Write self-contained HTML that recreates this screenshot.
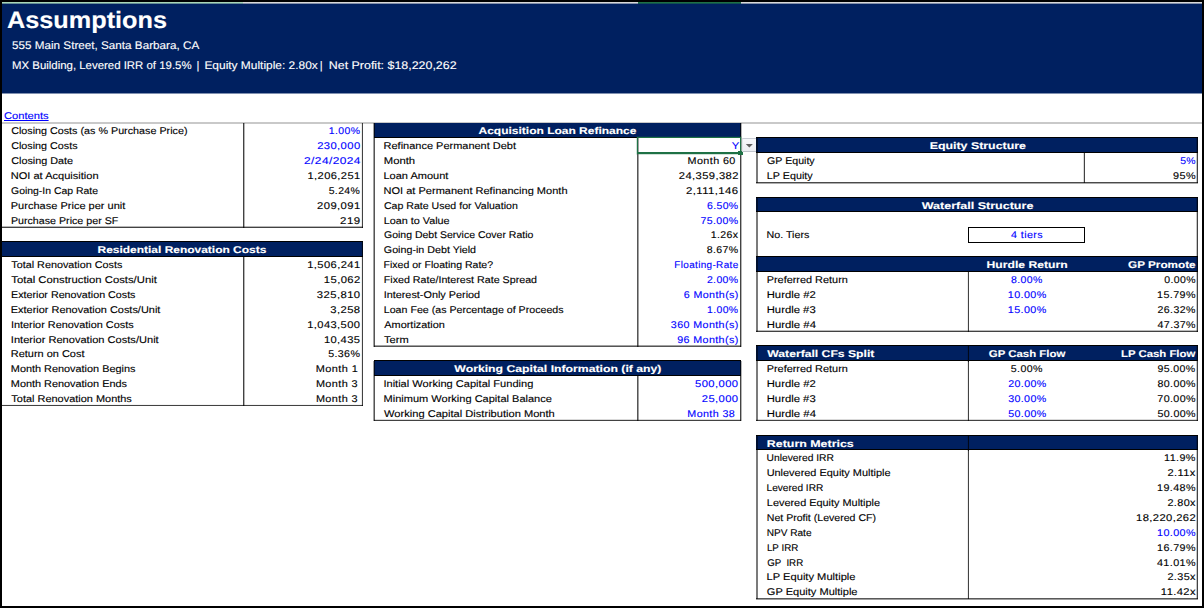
<!DOCTYPE html>
<html><head><meta charset="utf-8"><title>Assumptions</title>
<style>
html,body{margin:0;padding:0;background:#fff;}
body{text-rendering:geometricPrecision;width:1204px;height:608px;position:relative;overflow:hidden;font-family:"Liberation Sans",sans-serif;}
body>div,body>svg{position:absolute;}
.t{white-space:pre;-webkit-text-stroke:0.12px currentColor;}
</style></head><body>
<div class="r" style="left:0.00px;top:0.00px;width:1204.00px;height:2.00px;background:#000;"></div>
<div class="r" style="left:0.00px;top:606.00px;width:1204.00px;height:2.00px;background:#000;"></div>
<div class="r" style="left:0.00px;top:0.00px;width:2.00px;height:608.00px;background:#000;"></div>
<div class="r" style="left:1202.00px;top:0.00px;width:2.00px;height:608.00px;background:#000;"></div>
<div class="r" style="left:2.00px;top:2.00px;width:241.00px;height:1.00px;background:#a9d6b7;"></div>
<div class="r" style="left:2.00px;top:3.00px;width:241.00px;height:1.00px;background:#658d94;"></div>
<div class="r" style="left:243.00px;top:2.00px;width:394.80px;height:1.00px;background:#d9d9d9;"></div>
<div class="r" style="left:243.00px;top:3.00px;width:394.80px;height:1.00px;background:#828fa9;"></div>
<div class="r" style="left:637.80px;top:2.00px;width:103.00px;height:1.00px;background:#1e7145;"></div>
<div class="r" style="left:637.80px;top:3.00px;width:103.00px;height:1.00px;background:#125150;"></div>
<div class="r" style="left:740.80px;top:2.00px;width:461.20px;height:1.00px;background:#d9d9d9;"></div>
<div class="r" style="left:740.80px;top:3.00px;width:461.20px;height:1.00px;background:#828fa9;"></div>
<div class="r" style="left:2.00px;top:4.00px;width:1200.00px;height:89.00px;background:#002060;"></div>
<div class="r" style="left:2.00px;top:93.00px;width:1200.00px;height:1.00px;background:#8090b0;"></div>
<div class="r" style="left:2.00px;top:122.10px;width:1200.00px;height:1.50px;background:#c9c9c9;"></div>
<div class="t" style="left:0;top:4.00px;height:34px;line-height:34px;font-size:23.8px;color:#fff;transform-origin:0 50%;transform:translateX(7.00px) scaleX(1.0615);font-weight:bold;">Assumptions</div>
<div class="t" style="left:0;top:38.00px;height:16px;line-height:16px;font-size:11.1px;color:#fff;transform-origin:0 50%;transform:translateX(12.00px) scaleX(1.0540);">555 Main Street, Santa Barbara, CA</div>
<div class="t" style="left:0;top:58.00px;height:16px;line-height:16px;font-size:11.1px;color:#fff;transform-origin:0 50%;transform:translateX(12.00px) scaleX(1.0291);">MX Building, Levered IRR of 19.5%</div>
<div class="t" style="left:0;top:58.00px;height:16px;line-height:16px;font-size:11.1px;color:#fff;transform-origin:0 50%;transform:translateX(196.60px) scaleX(1.0000);">|</div>
<div class="t" style="left:0;top:58.00px;height:16px;line-height:16px;font-size:11.1px;color:#fff;transform-origin:0 50%;transform:translateX(204.40px) scaleX(1.0754);">Equity Multiple: 2.80x</div>
<div class="t" style="left:0;top:58.00px;height:16px;line-height:16px;font-size:11.1px;color:#fff;transform-origin:0 50%;transform:translateX(319.70px) scaleX(1.0000);">|</div>
<div class="t" style="left:0;top:58.00px;height:16px;line-height:16px;font-size:11.1px;color:#fff;transform-origin:0 50%;transform:translateX(328.80px) scaleX(1.1200);">Net Profit: $18,220,262</div>
<div class="t" style="left:0;top:109.00px;height:15px;line-height:15px;font-size:9.8px;color:#0000ff;transform-origin:0 50%;transform:translateX(4.00px) scaleX(1.1372);text-decoration:underline;">Contents</div>
<div class="t" style="top:124px;height:15px;line-height:15px;font-size:9.8px;color:#000;left:0;transform-origin:0 50%;transform:translateX(11.14px) scaleX(1.0978);">Closing Costs (as % Purchase Price)</div>
<div class="t" style="top:124px;height:15px;line-height:15px;font-size:9.8px;color:#0000ff;letter-spacing:0.35px;left:0;transform-origin:100% 50%;transform:translateX(360.31px) translateX(-100%) scaleX(1.0648);">1.00%</div>
<div class="t" style="top:139px;height:15px;line-height:15px;font-size:9.8px;color:#000;left:0;transform-origin:0 50%;transform:translateX(11.16px) scaleX(1.0991);">Closing Costs</div>
<div class="t" style="top:139px;height:15px;line-height:15px;font-size:9.8px;color:#0000ff;letter-spacing:0.35px;left:0;transform-origin:100% 50%;transform:translateX(360.54px) translateX(-100%) scaleX(1.1458);">230,000</div>
<div class="t" style="top:154px;height:15px;line-height:15px;font-size:9.8px;color:#000;left:0;transform-origin:0 50%;transform:translateX(11.16px) scaleX(1.1045);">Closing Date</div>
<div class="t" style="top:154px;height:15px;line-height:15px;font-size:9.8px;color:#0000ff;letter-spacing:0.35px;left:0;transform-origin:100% 50%;transform:translateX(360.79px) translateX(-100%) scaleX(1.2135);">2/24/2024</div>
<div class="t" style="top:169px;height:15px;line-height:15px;font-size:9.8px;color:#000;left:0;transform-origin:0 50%;transform:translateX(10.76px) scaleX(1.1279);">NOI at Acquisition</div>
<div class="t" style="top:169px;height:15px;line-height:15px;font-size:9.8px;color:#000;letter-spacing:0.35px;left:0;transform-origin:100% 50%;transform:translateX(360.56px) translateX(-100%) scaleX(1.1354);">1,206,251</div>
<div class="t" style="top:184px;height:15px;line-height:15px;font-size:9.8px;color:#000;left:0;transform-origin:0 50%;transform:translateX(11.02px) scaleX(1.0640);">Going-In Cap Rate</div>
<div class="t" style="top:184px;height:15px;line-height:15px;font-size:9.8px;color:#000;letter-spacing:0.35px;left:0;transform-origin:100% 50%;transform:translateX(360.23px) translateX(-100%) scaleX(1.0687);">5.24%</div>
<div class="t" style="top:199px;height:15px;line-height:15px;font-size:9.8px;color:#000;left:0;transform-origin:0 50%;transform:translateX(10.77px) scaleX(1.1254);">Purchase Price per unit</div>
<div class="t" style="top:199px;height:15px;line-height:15px;font-size:9.8px;color:#000;letter-spacing:0.35px;left:0;transform-origin:100% 50%;transform:translateX(360.59px) translateX(-100%) scaleX(1.1498);">209,091</div>
<div class="t" style="top:214px;height:15px;line-height:15px;font-size:9.8px;color:#000;left:0;transform-origin:0 50%;transform:translateX(10.92px) scaleX(1.0894);">Purchase Price per SF</div>
<div class="t" style="top:214px;height:15px;line-height:15px;font-size:9.8px;color:#000;letter-spacing:0.35px;left:0;transform-origin:100% 50%;transform:translateX(360.48px) translateX(-100%) scaleX(1.1702);">219</div>
<div class="r" style="left:243.00px;top:123.00px;width:1.00px;height:105.00px;background:rgba(0,0,0,0.740);"></div>
<div class="r" style="left:244.00px;top:123.00px;width:1.00px;height:105.00px;background:rgba(0,0,0,0.296);"></div>
<div class="r" style="left:361.00px;top:123.00px;width:1.00px;height:105.00px;background:rgba(0,0,0,0.074);"></div>
<div class="r" style="left:362.00px;top:123.00px;width:1.00px;height:105.00px;background:rgba(0,0,0,0.740);"></div>
<div class="r" style="left:2.00px;top:226.00px;width:361.00px;height:1.00px;background:rgba(0,0,0,0.281);"></div>
<div class="r" style="left:2.00px;top:227.00px;width:361.00px;height:1.00px;background:rgba(0,0,0,0.740);"></div>
<div class="r" style="left:2.00px;top:241.88px;width:360.90px;height:14.86px;background:#002060;"></div>
<div class="r" style="left:2.00px;top:255.74px;width:360.90px;height:1.00px;background:#000;"></div>
<div class="r" style="left:2.00px;top:241.38px;width:360.90px;height:1.00px;background:#000;"></div>
<div class="t" style="top:243px;height:15px;line-height:15px;font-size:9.8px;color:#fff;font-weight:bold;left:0;transform-origin:50% 50%;transform:translateX(181.94px) translateX(-50%) scaleX(1.2212);">Residential Renovation Costs</div>
<div class="t" style="top:258px;height:15px;line-height:15px;font-size:9.8px;color:#000;left:0;transform-origin:0 50%;transform:translateX(11.31px) scaleX(1.1021);">Total Renovation Costs</div>
<div class="t" style="top:258px;height:15px;line-height:15px;font-size:9.8px;color:#000;letter-spacing:0.35px;left:0;transform-origin:100% 50%;transform:translateX(360.52px) translateX(-100%) scaleX(1.1413);">1,506,241</div>
<div class="t" style="top:273px;height:15px;line-height:15px;font-size:9.8px;color:#000;left:0;transform-origin:0 50%;transform:translateX(11.34px) scaleX(1.1517);">Total Construction Costs/Unit</div>
<div class="t" style="top:273px;height:15px;line-height:15px;font-size:9.8px;color:#000;letter-spacing:0.35px;left:0;transform-origin:100% 50%;transform:translateX(360.72px) translateX(-100%) scaleX(1.1506);">15,062</div>
<div class="t" style="top:288px;height:15px;line-height:15px;font-size:9.8px;color:#000;left:0;transform-origin:0 50%;transform:translateX(10.99px) scaleX(1.0939);">Exterior Renovation Costs</div>
<div class="t" style="top:288px;height:15px;line-height:15px;font-size:9.8px;color:#000;letter-spacing:0.35px;left:0;transform-origin:100% 50%;transform:translateX(360.51px) translateX(-100%) scaleX(1.1523);">325,810</div>
<div class="t" style="top:303px;height:15px;line-height:15px;font-size:9.8px;color:#000;left:0;transform-origin:0 50%;transform:translateX(10.82px) scaleX(1.1164);">Exterior Renovation Costs/Unit</div>
<div class="t" style="top:303px;height:15px;line-height:15px;font-size:9.8px;color:#000;letter-spacing:0.35px;left:0;transform-origin:100% 50%;transform:translateX(360.48px) translateX(-100%) scaleX(1.1486);">3,258</div>
<div class="t" style="top:318px;height:15px;line-height:15px;font-size:9.8px;color:#000;left:0;transform-origin:0 50%;transform:translateX(10.90px) scaleX(1.1106);">Interior Renovation Costs</div>
<div class="t" style="top:318px;height:15px;line-height:15px;font-size:9.8px;color:#000;letter-spacing:0.35px;left:0;transform-origin:100% 50%;transform:translateX(360.32px) translateX(-100%) scaleX(1.1364);">1,043,500</div>
<div class="t" style="top:333px;height:15px;line-height:15px;font-size:9.8px;color:#000;left:0;transform-origin:0 50%;transform:translateX(10.84px) scaleX(1.1313);">Interior Renovation Costs/Unit</div>
<div class="t" style="top:333px;height:15px;line-height:15px;font-size:9.8px;color:#000;letter-spacing:0.35px;left:0;transform-origin:100% 50%;transform:translateX(360.46px) translateX(-100%) scaleX(1.1397);">10,435</div>
<div class="t" style="top:347px;height:15px;line-height:15px;font-size:9.8px;color:#000;left:0;transform-origin:0 50%;transform:translateX(10.77px) scaleX(1.1178);">Return on Cost</div>
<div class="t" style="top:347px;height:15px;line-height:15px;font-size:9.8px;color:#000;letter-spacing:0.35px;left:0;transform-origin:100% 50%;transform:translateX(360.26px) translateX(-100%) scaleX(1.0878);">5.36%</div>
<div class="t" style="top:362px;height:15px;line-height:15px;font-size:9.8px;color:#000;left:0;transform-origin:0 50%;transform:translateX(10.86px) scaleX(1.1101);">Month Renovation Begins</div>
<div class="t" style="top:362px;height:15px;line-height:15px;font-size:9.8px;color:#000;letter-spacing:0.35px;left:0;transform-origin:100% 50%;transform:translateX(361.61px) translateX(-100%) scaleX(1.1194);">Month 1 </div>
<div class="t" style="top:377px;height:15px;line-height:15px;font-size:9.8px;color:#000;left:0;transform-origin:0 50%;transform:translateX(10.86px) scaleX(1.1099);">Month Renovation Ends</div>
<div class="t" style="top:377px;height:15px;line-height:15px;font-size:9.8px;color:#000;letter-spacing:0.35px;left:0;transform-origin:100% 50%;transform:translateX(361.39px) translateX(-100%) scaleX(1.1121);">Month 3 </div>
<div class="t" style="top:392px;height:15px;line-height:15px;font-size:9.8px;color:#000;left:0;transform-origin:0 50%;transform:translateX(11.37px) scaleX(1.1171);">Total Renovation Months</div>
<div class="t" style="top:392px;height:15px;line-height:15px;font-size:9.8px;color:#000;letter-spacing:0.35px;left:0;transform-origin:100% 50%;transform:translateX(361.39px) translateX(-100%) scaleX(1.1121);">Month 3 </div>
<div class="r" style="left:243.00px;top:257.00px;width:1.00px;height:149.00px;background:rgba(0,0,0,0.740);"></div>
<div class="r" style="left:244.00px;top:257.00px;width:1.00px;height:149.00px;background:rgba(0,0,0,0.296);"></div>
<div class="r" style="left:361.00px;top:242.00px;width:1.00px;height:164.00px;background:rgba(0,0,0,0.074);"></div>
<div class="r" style="left:362.00px;top:242.00px;width:1.00px;height:164.00px;background:rgba(0,0,0,0.740);"></div>
<div class="r" style="left:2.00px;top:404.00px;width:361.00px;height:1.00px;background:rgba(0,0,0,0.044);"></div>
<div class="r" style="left:2.00px;top:405.00px;width:361.00px;height:1.00px;background:rgba(0,0,0,0.740);"></div>
<div class="r" style="left:373.50px;top:123.00px;width:367.50px;height:14.86px;background:#002060;"></div>
<div class="r" style="left:373.50px;top:136.86px;width:367.50px;height:1.00px;background:#000;"></div>
<div class="t" style="top:124px;height:15px;line-height:15px;font-size:9.8px;color:#fff;font-weight:bold;left:0;transform-origin:50% 50%;transform:translateX(557.47px) translateX(-50%) scaleX(1.2235);">Acquisition Loan Refinance</div>
<div class="t" style="top:139px;height:15px;line-height:15px;font-size:9.8px;color:#000;left:0;transform-origin:0 50%;transform:translateX(383.58px) scaleX(1.1207);">Refinance Permanent Debt</div>
<div class="t" style="top:139px;height:15px;line-height:15px;font-size:9.8px;color:#0000ff;letter-spacing:0.35px;left:0;transform-origin:100% 50%;transform:translateX(739.61px) translateX(-100%) scaleX(1.1510);">Y</div>
<div class="t" style="top:154px;height:15px;line-height:15px;font-size:9.8px;color:#000;left:0;transform-origin:0 50%;transform:translateX(383.73px) scaleX(1.1521);">Month</div>
<div class="t" style="top:154px;height:15px;line-height:15px;font-size:9.8px;color:#000;letter-spacing:0.35px;left:0;transform-origin:100% 50%;transform:translateX(739.08px) translateX(-100%) scaleX(1.1019);">Month 60 </div>
<div class="t" style="top:169px;height:15px;line-height:15px;font-size:9.8px;color:#000;left:0;transform-origin:0 50%;transform:translateX(383.45px) scaleX(1.1255);">Loan Amount</div>
<div class="t" style="top:169px;height:15px;line-height:15px;font-size:9.8px;color:#000;letter-spacing:0.35px;left:0;transform-origin:100% 50%;transform:translateX(738.79px) translateX(-100%) scaleX(1.1417);">24,359,382</div>
<div class="t" style="top:184px;height:15px;line-height:15px;font-size:9.8px;color:#000;left:0;transform-origin:0 50%;transform:translateX(383.53px) scaleX(1.1262);">NOI at Permanent Refinancing Month</div>
<div class="t" style="top:184px;height:15px;line-height:15px;font-size:9.8px;color:#000;letter-spacing:0.35px;left:0;transform-origin:100% 50%;transform:translateX(738.61px) translateX(-100%) scaleX(1.1634);">2,111,146</div>
<div class="t" style="top:199px;height:15px;line-height:15px;font-size:9.8px;color:#000;left:0;transform-origin:0 50%;transform:translateX(383.93px) scaleX(1.0798);">Cap Rate Used for Valuation</div>
<div class="t" style="top:199px;height:15px;line-height:15px;font-size:9.8px;color:#0000ff;letter-spacing:0.35px;left:0;transform-origin:100% 50%;transform:translateX(738.54px) translateX(-100%) scaleX(1.0679);">6.50%</div>
<div class="t" style="top:214px;height:15px;line-height:15px;font-size:9.8px;color:#000;left:0;transform-origin:0 50%;transform:translateX(383.67px) scaleX(1.1043);">Loan to Value</div>
<div class="t" style="top:214px;height:15px;line-height:15px;font-size:9.8px;color:#0000ff;letter-spacing:0.35px;left:0;transform-origin:100% 50%;transform:translateX(738.53px) translateX(-100%) scaleX(1.0766);">75.00%</div>
<div class="t" style="top:228px;height:15px;line-height:15px;font-size:9.8px;color:#000;left:0;transform-origin:0 50%;transform:translateX(383.96px) scaleX(1.0715);">Going Debt Service Cover Ratio</div>
<div class="t" style="top:228px;height:15px;line-height:15px;font-size:9.8px;color:#000;letter-spacing:0.35px;left:0;transform-origin:100% 50%;transform:translateX(738.33px) translateX(-100%) scaleX(1.0767);">1.26x</div>
<div class="t" style="top:243px;height:15px;line-height:15px;font-size:9.8px;color:#000;left:0;transform-origin:0 50%;transform:translateX(383.84px) scaleX(1.0927);">Going-in Debt Yield</div>
<div class="t" style="top:243px;height:15px;line-height:15px;font-size:9.8px;color:#000;letter-spacing:0.35px;left:0;transform-origin:100% 50%;transform:translateX(738.47px) translateX(-100%) scaleX(1.0763);">8.67%</div>
<div class="t" style="top:258px;height:15px;line-height:15px;font-size:9.8px;color:#000;left:0;transform-origin:0 50%;transform:translateX(383.50px) scaleX(1.0758);">Fixed or Floating Rate?</div>
<div class="t" style="top:258px;height:15px;line-height:15px;font-size:9.8px;color:#0000ff;letter-spacing:0.35px;left:0;transform-origin:100% 50%;transform:translateX(738.55px) translateX(-100%) scaleX(1.0144);">Floating-Rate</div>
<div class="t" style="top:273px;height:15px;line-height:15px;font-size:9.8px;color:#000;left:0;transform-origin:0 50%;transform:translateX(383.76px) scaleX(1.0912);">Fixed Rate/Interest Rate Spread</div>
<div class="t" style="top:273px;height:15px;line-height:15px;font-size:9.8px;color:#0000ff;letter-spacing:0.35px;left:0;transform-origin:100% 50%;transform:translateX(738.53px) translateX(-100%) scaleX(1.0710);">2.00%</div>
<div class="t" style="top:288px;height:15px;line-height:15px;font-size:9.8px;color:#000;left:0;transform-origin:0 50%;transform:translateX(383.66px) scaleX(1.1074);">Interest-Only Period</div>
<div class="t" style="top:288px;height:15px;line-height:15px;font-size:9.8px;color:#0000ff;letter-spacing:0.35px;left:0;transform-origin:100% 50%;transform:translateX(738.76px) translateX(-100%) scaleX(1.0920);">6 Month(s)</div>
<div class="t" style="top:303px;height:15px;line-height:15px;font-size:9.8px;color:#000;left:0;transform-origin:0 50%;transform:translateX(383.76px) scaleX(1.0859);">Loan Fee (as Percentage of Proceeds</div>
<div class="t" style="top:303px;height:15px;line-height:15px;font-size:9.8px;color:#0000ff;letter-spacing:0.35px;left:0;transform-origin:100% 50%;transform:translateX(738.44px) translateX(-100%) scaleX(1.0634);">1.00%</div>
<div class="t" style="top:318px;height:15px;line-height:15px;font-size:9.8px;color:#000;left:0;transform-origin:0 50%;transform:translateX(384.28px) scaleX(1.1137);">Amortization</div>
<div class="t" style="top:318px;height:15px;line-height:15px;font-size:9.8px;color:#0000ff;letter-spacing:0.35px;left:0;transform-origin:100% 50%;transform:translateX(738.58px) translateX(-100%) scaleX(1.0938);">360 Month(s)</div>
<div class="t" style="top:333px;height:15px;line-height:15px;font-size:9.8px;color:#000;left:0;transform-origin:0 50%;transform:translateX(384.05px) scaleX(1.1327);">Term</div>
<div class="t" style="top:333px;height:15px;line-height:15px;font-size:9.8px;color:#0000ff;letter-spacing:0.35px;left:0;transform-origin:100% 50%;transform:translateX(738.61px) translateX(-100%) scaleX(1.0949);">96 Month(s)</div>
<div class="r" style="left:373.00px;top:123.00px;width:1.00px;height:224.00px;background:rgba(0,0,0,0.370);"></div>
<div class="r" style="left:374.00px;top:123.00px;width:1.00px;height:224.00px;background:rgba(0,0,0,0.666);"></div>
<div class="r" style="left:637.00px;top:138.00px;width:1.00px;height:209.00px;background:rgba(0,0,0,0.666);"></div>
<div class="r" style="left:638.00px;top:138.00px;width:1.00px;height:209.00px;background:rgba(0,0,0,0.370);"></div>
<div class="r" style="left:740.00px;top:123.00px;width:1.00px;height:224.00px;background:rgba(0,0,0,0.740);"></div>
<div class="r" style="left:741.00px;top:123.00px;width:1.00px;height:224.00px;background:rgba(0,0,0,0.296);"></div>
<div class="r" style="left:374.00px;top:345.00px;width:367.00px;height:1.00px;background:rgba(0,0,0,0.370);"></div>
<div class="r" style="left:374.00px;top:346.00px;width:367.00px;height:1.00px;background:rgba(0,0,0,0.666);"></div>
<div class="b" style="left:637px;top:137px;width:104px;height:17px;border:1px solid #1e7145;border-bottom-width:2px;box-sizing:border-box;box-shadow:0 0 0 0.6px rgba(30,113,69,.35)"></div>
<div class="r" style="left:737.50px;top:150.60px;width:5.50px;height:4.40px;background:#fff;"></div>
<div class="r" style="left:738.20px;top:151.30px;width:4.60px;height:3.50px;background:#1e7145;"></div>
<div class="b" style="left:742px;top:138px;width:15px;height:14px;background:linear-gradient(#f7f8fa,#eceef2);border:1px solid #e3e5ea;border-top-color:#c9cdd4;border-bottom-color:#c0c4cc;box-sizing:border-box"></div>
<svg style="position:absolute;left:745px;top:143px" width="9" height="6" viewBox="0 0 9 6"><path d="M0.8 1.1 L7.9 1.1 L4.35 4.6 Z" fill="#5f5f5f"/></svg>
<div class="r" style="left:373.50px;top:360.76px;width:367.50px;height:14.86px;background:#002060;"></div>
<div class="r" style="left:373.50px;top:374.62px;width:367.50px;height:1.00px;background:#000;"></div>
<div class="r" style="left:373.50px;top:360.26px;width:367.50px;height:1.00px;background:#000;"></div>
<div class="t" style="top:362px;height:15px;line-height:15px;font-size:9.8px;color:#fff;font-weight:bold;left:0;transform-origin:50% 50%;transform:translateX(557.88px) translateX(-50%) scaleX(1.2489);">Working Capital Information (if any)</div>
<div class="t" style="top:377px;height:15px;line-height:15px;font-size:9.8px;color:#000;left:0;transform-origin:0 50%;transform:translateX(383.39px) scaleX(1.1303);">Initial Working Capital Funding</div>
<div class="t" style="top:377px;height:15px;line-height:15px;font-size:9.8px;color:#0000ff;letter-spacing:0.35px;left:0;transform-origin:100% 50%;transform:translateX(738.46px) translateX(-100%) scaleX(1.1455);">500,000</div>
<div class="t" style="top:392px;height:15px;line-height:15px;font-size:9.8px;color:#000;left:0;transform-origin:0 50%;transform:translateX(383.51px) scaleX(1.1259);">Minimum Working Capital Balance</div>
<div class="t" style="top:392px;height:15px;line-height:15px;font-size:9.8px;color:#0000ff;letter-spacing:0.35px;left:0;transform-origin:100% 50%;transform:translateX(738.51px) translateX(-100%) scaleX(1.1454);">25,000</div>
<div class="t" style="top:407px;height:15px;line-height:15px;font-size:9.8px;color:#000;left:0;transform-origin:0 50%;transform:translateX(384.04px) scaleX(1.1335);">Working Capital Distribution Month</div>
<div class="t" style="top:407px;height:15px;line-height:15px;font-size:9.8px;color:#0000ff;letter-spacing:0.35px;left:0;transform-origin:100% 50%;transform:translateX(738.49px) translateX(-100%) scaleX(1.0952);">Month 38 </div>
<div class="r" style="left:373.00px;top:361.00px;width:1.00px;height:60.00px;background:rgba(0,0,0,0.370);"></div>
<div class="r" style="left:374.00px;top:361.00px;width:1.00px;height:60.00px;background:rgba(0,0,0,0.666);"></div>
<div class="r" style="left:637.00px;top:376.00px;width:1.00px;height:45.00px;background:rgba(0,0,0,0.666);"></div>
<div class="r" style="left:638.00px;top:376.00px;width:1.00px;height:45.00px;background:rgba(0,0,0,0.370);"></div>
<div class="r" style="left:740.00px;top:361.00px;width:1.00px;height:60.00px;background:rgba(0,0,0,0.740);"></div>
<div class="r" style="left:741.00px;top:361.00px;width:1.00px;height:60.00px;background:rgba(0,0,0,0.296);"></div>
<div class="r" style="left:374.00px;top:419.00px;width:367.00px;height:1.00px;background:rgba(0,0,0,0.148);"></div>
<div class="r" style="left:374.00px;top:420.00px;width:367.00px;height:1.00px;background:rgba(0,0,0,0.740);"></div>
<div class="r" style="left:756.30px;top:137.86px;width:441.40px;height:14.86px;background:#002060;"></div>
<div class="r" style="left:756.30px;top:151.72px;width:441.40px;height:1.00px;background:#000;"></div>
<div class="r" style="left:756.30px;top:137.36px;width:441.40px;height:1.00px;background:#000;"></div>
<div class="t" style="top:139px;height:15px;line-height:15px;font-size:9.8px;color:#fff;font-weight:bold;left:0;transform-origin:50% 50%;transform:translateX(977.79px) translateX(-50%) scaleX(1.2628);">Equity Structure</div>
<div class="t" style="top:154px;height:15px;line-height:15px;font-size:9.8px;color:#000;left:0;transform-origin:0 50%;transform:translateX(767.09px) scaleX(1.0834);">GP Equity</div>
<div class="t" style="top:154px;height:15px;line-height:15px;font-size:9.8px;color:#0000ff;letter-spacing:0.35px;left:0;transform-origin:100% 50%;transform:translateX(1196.03px) translateX(-100%) scaleX(1.0644);">5%</div>
<div class="t" style="top:169px;height:15px;line-height:15px;font-size:9.8px;color:#000;left:0;transform-origin:0 50%;transform:translateX(766.83px) scaleX(1.0992);">LP Equity</div>
<div class="t" style="top:169px;height:15px;line-height:15px;font-size:9.8px;color:#000;letter-spacing:0.35px;left:0;transform-origin:100% 50%;transform:translateX(1196.05px) translateX(-100%) scaleX(1.1095);">95%</div>
<div class="r" style="left:756.00px;top:138.00px;width:1.00px;height:45.00px;background:rgba(0,0,0,0.518);"></div>
<div class="r" style="left:757.00px;top:138.00px;width:1.00px;height:45.00px;background:rgba(0,0,0,0.518);"></div>
<div class="r" style="left:1083.00px;top:153.00px;width:1.00px;height:30.00px;background:rgba(0,0,0,0.148);"></div>
<div class="r" style="left:1084.00px;top:153.00px;width:1.00px;height:30.00px;background:rgba(0,0,0,0.740);"></div>
<div class="r" style="left:1196.00px;top:138.00px;width:1.00px;height:45.00px;background:rgba(0,0,0,0.222);"></div>
<div class="r" style="left:1197.00px;top:138.00px;width:1.00px;height:45.00px;background:rgba(0,0,0,0.740);"></div>
<div class="r" style="left:756.00px;top:182.00px;width:442.00px;height:1.00px;background:rgba(0,0,0,0.710);"></div>
<div class="r" style="left:756.00px;top:183.00px;width:442.00px;height:1.00px;background:rgba(0,0,0,0.326);"></div>
<div class="r" style="left:756.30px;top:197.30px;width:441.40px;height:14.86px;background:#002060;"></div>
<div class="r" style="left:756.30px;top:211.16px;width:441.40px;height:1.00px;background:#000;"></div>
<div class="r" style="left:756.30px;top:196.80px;width:441.40px;height:1.00px;background:#000;"></div>
<div class="t" style="top:199px;height:15px;line-height:15px;font-size:9.8px;color:#fff;font-weight:bold;left:0;transform-origin:50% 50%;transform:translateX(977.54px) translateX(-50%) scaleX(1.2791);">Waterfall Structure</div>
<div class="t" style="top:228px;height:15px;line-height:15px;font-size:9.8px;color:#000;left:0;transform-origin:0 50%;transform:translateX(766.56px) scaleX(1.0904);">No. Tiers</div>
<div class="b" style="left:967.9px;top:226.82px;width:116.89999999999998px;height:15.86px;border:1px solid #000;box-sizing:border-box"></div>
<div class="t" style="top:228px;height:15px;line-height:15px;font-size:9.8px;color:#0000ff;letter-spacing:0.35px;left:0;transform-origin:50% 50%;transform:translateX(1027.00px) translateX(-50%) scaleX(1.0912);">4 tiers</div>
<div class="r" style="left:756.30px;top:256.74px;width:441.40px;height:14.86px;background:#002060;"></div>
<div class="r" style="left:756.30px;top:270.60px;width:441.40px;height:1.00px;background:#000;"></div>
<div class="r" style="left:756.30px;top:256.24px;width:441.40px;height:1.00px;background:#000;"></div>
<div class="t" style="top:258px;height:15px;line-height:15px;font-size:9.8px;color:#fff;font-weight:bold;left:0;transform-origin:50% 50%;transform:translateX(1027.08px) translateX(-50%) scaleX(1.2399);">Hurdle Return</div>
<div class="t" style="top:258px;height:15px;line-height:15px;font-size:9.8px;color:#fff;font-weight:bold;left:0;transform-origin:100% 50%;transform:translateX(1195.56px) translateX(-100%) scaleX(1.1966);">GP Promote</div>
<div class="t" style="top:273px;height:15px;line-height:15px;font-size:9.8px;color:#000;left:0;transform-origin:0 50%;transform:translateX(766.69px) scaleX(1.1118);">Preferred Return</div>
<div class="t" style="top:273px;height:15px;line-height:15px;font-size:9.8px;color:#0000ff;letter-spacing:0.35px;left:0;transform-origin:50% 50%;transform:translateX(1026.94px) translateX(-50%) scaleX(1.0715);">8.00%</div>
<div class="t" style="top:273px;height:15px;line-height:15px;font-size:9.8px;color:#000;letter-spacing:0.35px;left:0;transform-origin:100% 50%;transform:translateX(1195.84px) translateX(-100%) scaleX(1.0713);">0.00%</div>
<div class="t" style="top:288px;height:15px;line-height:15px;font-size:9.8px;color:#000;left:0;transform-origin:0 50%;transform:translateX(766.69px) scaleX(1.1540);">Hurdle #2</div>
<div class="t" style="top:288px;height:15px;line-height:15px;font-size:9.8px;color:#0000ff;letter-spacing:0.35px;left:0;transform-origin:50% 50%;transform:translateX(1027.22px) translateX(-50%) scaleX(1.0965);">10.00%</div>
<div class="t" style="top:288px;height:15px;line-height:15px;font-size:9.8px;color:#000;letter-spacing:0.35px;left:0;transform-origin:100% 50%;transform:translateX(1195.92px) translateX(-100%) scaleX(1.0985);">15.79%</div>
<div class="t" style="top:303px;height:15px;line-height:15px;font-size:9.8px;color:#000;left:0;transform-origin:0 50%;transform:translateX(766.72px) scaleX(1.1520);">Hurdle #3</div>
<div class="t" style="top:303px;height:15px;line-height:15px;font-size:9.8px;color:#0000ff;letter-spacing:0.35px;left:0;transform-origin:50% 50%;transform:translateX(1027.22px) translateX(-50%) scaleX(1.0965);">15.00%</div>
<div class="t" style="top:303px;height:15px;line-height:15px;font-size:9.8px;color:#000;letter-spacing:0.35px;left:0;transform-origin:100% 50%;transform:translateX(1195.67px) translateX(-100%) scaleX(1.0778);">26.32%</div>
<div class="t" style="top:318px;height:15px;line-height:15px;font-size:9.8px;color:#000;left:0;transform-origin:0 50%;transform:translateX(766.69px) scaleX(1.1603);">Hurdle #4</div>
<div class="t" style="top:318px;height:15px;line-height:15px;font-size:9.8px;color:#000;letter-spacing:0.35px;left:0;transform-origin:100% 50%;transform:translateX(1195.93px) translateX(-100%) scaleX(1.0856);">47.37%</div>
<div class="r" style="left:756.00px;top:197.00px;width:1.00px;height:135.00px;background:rgba(0,0,0,0.518);"></div>
<div class="r" style="left:757.00px;top:197.00px;width:1.00px;height:135.00px;background:rgba(0,0,0,0.518);"></div>
<div class="r" style="left:967.00px;top:272.00px;width:1.00px;height:60.00px;background:rgba(0,0,0,0.074);"></div>
<div class="r" style="left:968.00px;top:272.00px;width:1.00px;height:60.00px;background:rgba(0,0,0,0.740);"></div>
<div class="r" style="left:1196.00px;top:197.00px;width:1.00px;height:135.00px;background:rgba(0,0,0,0.222);"></div>
<div class="r" style="left:1197.00px;top:197.00px;width:1.00px;height:135.00px;background:rgba(0,0,0,0.740);"></div>
<div class="r" style="left:756.00px;top:330.00px;width:442.00px;height:1.00px;background:rgba(0,0,0,0.266);"></div>
<div class="r" style="left:756.00px;top:331.00px;width:442.00px;height:1.00px;background:rgba(0,0,0,0.740);"></div>
<div class="r" style="left:756.30px;top:345.90px;width:441.40px;height:14.86px;background:#002060;"></div>
<div class="r" style="left:756.30px;top:359.76px;width:441.40px;height:1.00px;background:#000;"></div>
<div class="r" style="left:756.30px;top:345.40px;width:441.40px;height:1.00px;background:#000;"></div>
<div class="t" style="top:347px;height:15px;line-height:15px;font-size:9.8px;color:#fff;font-weight:bold;left:0;transform-origin:0 50%;transform:translateX(767.30px) scaleX(1.2417);">Waterfall CFs Split</div>
<div class="t" style="top:347px;height:15px;line-height:15px;font-size:9.8px;color:#fff;font-weight:bold;left:0;transform-origin:50% 50%;transform:translateX(1027.02px) translateX(-50%) scaleX(1.1645);">GP Cash Flow</div>
<div class="t" style="top:347px;height:15px;line-height:15px;font-size:9.8px;color:#fff;font-weight:bold;left:0;transform-origin:100% 50%;transform:translateX(1195.33px) translateX(-100%) scaleX(1.1605);">LP Cash Flow</div>
<div class="t" style="top:362px;height:15px;line-height:15px;font-size:9.8px;color:#000;left:0;transform-origin:0 50%;transform:translateX(766.69px) scaleX(1.1118);">Preferred Return</div>
<div class="t" style="top:362px;height:15px;line-height:15px;font-size:9.8px;color:#000;letter-spacing:0.35px;left:0;transform-origin:50% 50%;transform:translateX(1026.86px) translateX(-50%) scaleX(1.0857);">5.00%</div>
<div class="t" style="top:362px;height:15px;line-height:15px;font-size:9.8px;color:#000;letter-spacing:0.35px;left:0;transform-origin:100% 50%;transform:translateX(1195.64px) translateX(-100%) scaleX(1.0803);">95.00%</div>
<div class="t" style="top:377px;height:15px;line-height:15px;font-size:9.8px;color:#000;left:0;transform-origin:0 50%;transform:translateX(766.69px) scaleX(1.1540);">Hurdle #2</div>
<div class="t" style="top:377px;height:15px;line-height:15px;font-size:9.8px;color:#0000ff;letter-spacing:0.35px;left:0;transform-origin:50% 50%;transform:translateX(1027.40px) translateX(-50%) scaleX(1.0873);">20.00%</div>
<div class="t" style="top:377px;height:15px;line-height:15px;font-size:9.8px;color:#000;letter-spacing:0.35px;left:0;transform-origin:100% 50%;transform:translateX(1195.86px) translateX(-100%) scaleX(1.0850);">80.00%</div>
<div class="t" style="top:392px;height:15px;line-height:15px;font-size:9.8px;color:#000;left:0;transform-origin:0 50%;transform:translateX(766.72px) scaleX(1.1520);">Hurdle #3</div>
<div class="t" style="top:392px;height:15px;line-height:15px;font-size:9.8px;color:#0000ff;letter-spacing:0.35px;left:0;transform-origin:50% 50%;transform:translateX(1027.38px) translateX(-50%) scaleX(1.0898);">30.00%</div>
<div class="t" style="top:392px;height:15px;line-height:15px;font-size:9.8px;color:#000;letter-spacing:0.35px;left:0;transform-origin:100% 50%;transform:translateX(1195.94px) translateX(-100%) scaleX(1.0936);">70.00%</div>
<div class="t" style="top:407px;height:15px;line-height:15px;font-size:9.8px;color:#000;left:0;transform-origin:0 50%;transform:translateX(766.69px) scaleX(1.1603);">Hurdle #4</div>
<div class="t" style="top:407px;height:15px;line-height:15px;font-size:9.8px;color:#0000ff;letter-spacing:0.35px;left:0;transform-origin:50% 50%;transform:translateX(1027.45px) translateX(-50%) scaleX(1.0850);">50.00%</div>
<div class="t" style="top:407px;height:15px;line-height:15px;font-size:9.8px;color:#000;letter-spacing:0.35px;left:0;transform-origin:100% 50%;transform:translateX(1195.97px) translateX(-100%) scaleX(1.0901);">50.00%</div>
<div class="r" style="left:756.00px;top:346.00px;width:1.00px;height:75.00px;background:rgba(0,0,0,0.518);"></div>
<div class="r" style="left:757.00px;top:346.00px;width:1.00px;height:75.00px;background:rgba(0,0,0,0.518);"></div>
<div class="r" style="left:967.00px;top:361.00px;width:1.00px;height:60.00px;background:rgba(0,0,0,0.074);"></div>
<div class="r" style="left:968.00px;top:361.00px;width:1.00px;height:60.00px;background:rgba(0,0,0,0.740);"></div>
<div class="r" style="left:1196.00px;top:346.00px;width:1.00px;height:75.00px;background:rgba(0,0,0,0.222);"></div>
<div class="r" style="left:1197.00px;top:346.00px;width:1.00px;height:75.00px;background:rgba(0,0,0,0.740);"></div>
<div class="r" style="left:756.00px;top:419.00px;width:442.00px;height:1.00px;background:rgba(0,0,0,0.148);"></div>
<div class="r" style="left:756.00px;top:420.00px;width:442.00px;height:1.00px;background:rgba(0,0,0,0.740);"></div>
<div class="r" style="left:756.30px;top:435.06px;width:441.40px;height:14.86px;background:#002060;"></div>
<div class="r" style="left:756.30px;top:448.92px;width:441.40px;height:1.00px;background:#000;"></div>
<div class="r" style="left:756.30px;top:434.56px;width:441.40px;height:1.00px;background:#000;"></div>
<div class="t" style="top:437px;height:15px;line-height:15px;font-size:9.8px;color:#fff;font-weight:bold;left:0;transform-origin:0 50%;transform:translateX(766.84px) scaleX(1.2667);">Return Metrics</div>
<div class="t" style="top:451px;height:15px;line-height:15px;font-size:9.8px;color:#000;left:0;transform-origin:0 50%;transform:translateX(766.54px) scaleX(1.0487);">Unlevered IRR</div>
<div class="t" style="top:451px;height:15px;line-height:15px;font-size:9.8px;color:#000;letter-spacing:0.35px;left:0;transform-origin:100% 50%;transform:translateX(1195.82px) translateX(-100%) scaleX(1.1031);">11.9%</div>
<div class="t" style="top:466px;height:15px;line-height:15px;font-size:9.8px;color:#000;left:0;transform-origin:0 50%;transform:translateX(766.64px) scaleX(1.1148);">Unlevered Equity Multiple</div>
<div class="t" style="top:466px;height:15px;line-height:15px;font-size:9.8px;color:#000;letter-spacing:0.35px;left:0;transform-origin:100% 50%;transform:translateX(1195.79px) translateX(-100%) scaleX(1.1357);">2.11x</div>
<div class="t" style="top:481px;height:15px;line-height:15px;font-size:9.8px;color:#000;left:0;transform-origin:0 50%;transform:translateX(766.58px) scaleX(1.0306);">Levered IRR</div>
<div class="t" style="top:481px;height:15px;line-height:15px;font-size:9.8px;color:#000;letter-spacing:0.35px;left:0;transform-origin:100% 50%;transform:translateX(1195.92px) translateX(-100%) scaleX(1.0985);">19.48%</div>
<div class="t" style="top:496px;height:15px;line-height:15px;font-size:9.8px;color:#000;left:0;transform-origin:0 50%;transform:translateX(766.82px) scaleX(1.1122);">Levered Equity Multiple</div>
<div class="t" style="top:496px;height:15px;line-height:15px;font-size:9.8px;color:#000;letter-spacing:0.35px;left:0;transform-origin:100% 50%;transform:translateX(1195.90px) translateX(-100%) scaleX(1.1076);">2.80x</div>
<div class="t" style="top:511px;height:15px;line-height:15px;font-size:9.8px;color:#000;left:0;transform-origin:0 50%;transform:translateX(766.74px) scaleX(1.0793);">Net Profit (Levered CF)</div>
<div class="t" style="top:511px;height:15px;line-height:15px;font-size:9.8px;color:#000;letter-spacing:0.35px;left:0;transform-origin:100% 50%;transform:translateX(1196.11px) translateX(-100%) scaleX(1.1424);">18,220,262</div>
<div class="t" style="top:526px;height:15px;line-height:15px;font-size:9.8px;color:#000;left:0;transform-origin:0 50%;transform:translateX(766.70px) scaleX(1.0290);">NPV Rate</div>
<div class="t" style="top:526px;height:15px;line-height:15px;font-size:9.8px;color:#0000ff;letter-spacing:0.35px;left:0;transform-origin:100% 50%;transform:translateX(1195.92px) translateX(-100%) scaleX(1.0985);">10.00%</div>
<div class="t" style="top:541px;height:15px;line-height:15px;font-size:9.8px;color:#000;left:0;transform-origin:0 50%;transform:translateX(766.94px) scaleX(0.9967);">LP IRR</div>
<div class="t" style="top:541px;height:15px;line-height:15px;font-size:9.8px;color:#000;letter-spacing:0.35px;left:0;transform-origin:100% 50%;transform:translateX(1195.92px) translateX(-100%) scaleX(1.0985);">16.79%</div>
<div class="t" style="top:556px;height:15px;line-height:15px;font-size:9.8px;color:#000;left:0;transform-origin:0 50%;transform:translateX(767.16px) scaleX(0.9915);">GP  IRR</div>
<div class="t" style="top:556px;height:15px;line-height:15px;font-size:9.8px;color:#000;letter-spacing:0.35px;left:0;transform-origin:100% 50%;transform:translateX(1195.90px) translateX(-100%) scaleX(1.1020);">41.01%</div>
<div class="t" style="top:570px;height:15px;line-height:15px;font-size:9.8px;color:#000;left:0;transform-origin:0 50%;transform:translateX(766.55px) scaleX(1.1368);">LP Equity Multiple</div>
<div class="t" style="top:570px;height:15px;line-height:15px;font-size:9.8px;color:#000;letter-spacing:0.35px;left:0;transform-origin:100% 50%;transform:translateX(1195.90px) translateX(-100%) scaleX(1.1076);">2.35x</div>
<div class="t" style="top:585px;height:15px;line-height:15px;font-size:9.8px;color:#000;left:0;transform-origin:0 50%;transform:translateX(766.85px) scaleX(1.1272);">GP Equity Multiple</div>
<div class="t" style="top:585px;height:15px;line-height:15px;font-size:9.8px;color:#000;letter-spacing:0.35px;left:0;transform-origin:100% 50%;transform:translateX(1195.95px) translateX(-100%) scaleX(1.1398);">11.42x</div>
<div class="r" style="left:756.00px;top:435.00px;width:1.00px;height:164.00px;background:rgba(0,0,0,0.518);"></div>
<div class="r" style="left:757.00px;top:435.00px;width:1.00px;height:164.00px;background:rgba(0,0,0,0.518);"></div>
<div class="r" style="left:967.00px;top:450.00px;width:1.00px;height:149.00px;background:rgba(0,0,0,0.074);"></div>
<div class="r" style="left:968.00px;top:450.00px;width:1.00px;height:149.00px;background:rgba(0,0,0,0.740);"></div>
<div class="r" style="left:1196.00px;top:435.00px;width:1.00px;height:164.00px;background:rgba(0,0,0,0.222);"></div>
<div class="r" style="left:1197.00px;top:435.00px;width:1.00px;height:164.00px;background:rgba(0,0,0,0.740);"></div>
<div class="r" style="left:756.00px;top:598.00px;width:442.00px;height:1.00px;background:rgba(0,0,0,0.651);"></div>
<div class="r" style="left:756.00px;top:599.00px;width:442.00px;height:1.00px;background:rgba(0,0,0,0.385);"></div>
<div class="r" style="left:967.00px;top:435.00px;width:1.00px;height:16.00px;background:rgba(0,0,0,0.074);"></div>
<div class="r" style="left:968.00px;top:435.00px;width:1.00px;height:16.00px;background:rgba(0,0,0,0.740);"></div>
<div class="r" style="left:967.00px;top:346.00px;width:1.00px;height:16.00px;background:rgba(0,0,0,0.074);"></div>
<div class="r" style="left:968.00px;top:346.00px;width:1.00px;height:16.00px;background:rgba(0,0,0,0.740);"></div>
</body></html>
